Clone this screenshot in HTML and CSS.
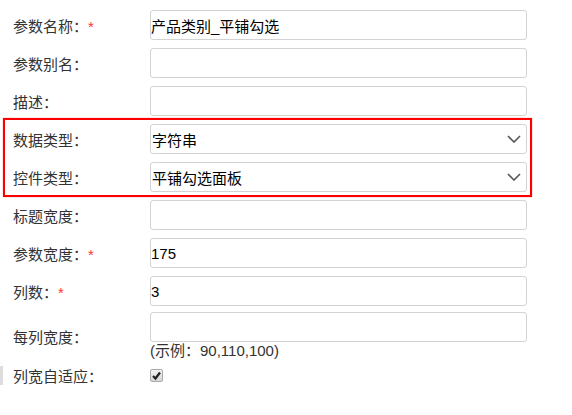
FILE: index.html
```html
<html>
<head>
<meta charset="utf-8">
<link rel="stylesheet" href="styles.css">
</head>
<body>
<div class="form">
  <div class="row">
    <label class="lbl">参数名称：<span class="req">*</span></label>
    <div class="field"><input class="txt" type="text" value="产品类别_平铺勾选"></div>
  </div>
  <div class="row">
    <label class="lbl">参数别名：</label>
    <div class="field"><input class="txt" type="text" value=""></div>
  </div>
  <div class="row">
    <label class="lbl">描述：</label>
    <div class="field"><input class="txt" type="text" value=""></div>
  </div>

  <div class="group">
    <div class="row">
      <label class="lbl">数据类型：</label>
      <div class="field">
        <div class="select">
          <span>字符串</span>
          <svg class="arrow" width="14" height="8" viewBox="0 0 14 8"><polyline points="1,1 7,7 13,1" fill="none" stroke="#555" stroke-width="1.6"/></svg>
        </div>
      </div>
    </div>
    <div class="row">
      <label class="lbl">控件类型：</label>
      <div class="field">
        <div class="select">
          <span>平铺勾选面板</span>
          <svg class="arrow" width="14" height="8" viewBox="0 0 14 8"><polyline points="1,1 7,7 13,1" fill="none" stroke="#555" stroke-width="1.6"/></svg>
        </div>
      </div>
    </div>
  </div>

  <div class="row">
    <label class="lbl">标题宽度：</label>
    <div class="field"><input class="txt" type="text" value=""></div>
  </div>
  <div class="row">
    <label class="lbl">参数宽度：<span class="req">*</span></label>
    <div class="field"><input class="txt" type="text" value="175"></div>
  </div>
  <div class="row">
    <label class="lbl">列数：<span class="req">*</span></label>
    <div class="field"><input class="txt" type="text" value="3"></div>
  </div>
  <div class="row tall">
    <label class="lbl">每列宽度：</label>
    <div class="field">
      <input class="txt" type="text" value="">
      <div class="hint">(示例：90,110,100)</div>
    </div>
  </div>
  <div class="row check-row">
    <label class="lbl">列宽自适应：</label>
    <div class="field">
      <span class="check">
        <svg width="13" height="13" viewBox="0 0 13 13"><polyline points="3,7 5.5,9.5 10,3.5" fill="none" stroke="#222" stroke-width="2.2"/></svg>
      </span>
    </div>
  </div>
</div>
</body>
</html>
```
FILE: styles.css
```css
body {
  margin: 0;
  background: #fff;
  font-family: "Liberation Sans", "Noto Sans CJK SC", sans-serif;
  font-size: 15px;
  color: #333;
}

.form {
  padding-top: 6px;
  width: 540px;
}

.row {
  display: flex;
  align-items: center;
  padding: 4px 0;
}

.lbl {
  box-sizing: border-box;
  width: 150px;
  padding-left: 13px;
  color: #333;
  white-space: nowrap;
}

.req {
  color: #f33;
}

.field {
  width: 377px;
}

.txt {
  box-sizing: border-box;
  display: block;
  width: 377px;
  height: 30px;
  margin: 0;
  padding: 0;
  border: 1px solid #d3d3d3;
  border-radius: 3px;
  font-family: "Liberation Sans", "Noto Sans CJK SC", sans-serif;
  font-size: 15px;
  color: #000;
  background: #fff;
  outline: none;
}

.group {
  position: relative;
}

.group:after {
  content: '';
  position: absolute;
  top: -2px;
  bottom: -1px;
  left: 3px;
  width: 529px;
  box-sizing: border-box;
  border: 2px solid #ff0000;
  box-shadow: 0 0 1px rgba(255, 0, 0, .6);
  pointer-events: none;
}

.select {
  box-sizing: border-box;
  display: flex;
  align-items: center;
  justify-content: space-between;
  width: 377px;
  height: 30px;
  padding: 0 5px 0 1px;
  border: 1px solid #d3d3d3;
  border-radius: 3px;
  color: #000;
}

.arrow {
  display: block;
}

.row.tall {
  padding-top: 2px;
}

.hint {
  line-height: 18px;
  color: #333;
}

.check-row {
  margin-top: 2px;
  padding: 0;
  height: 19px;
  border-left: 3px solid #ddd;
}

.check-row .lbl {
  width: 147px;
  padding-left: 10px;
}

.check {
  display: block;
  box-sizing: border-box;
  width: 13px;
  height: 13px;
  border: 1px solid #aaa;
  border-radius: 2px;
  background: linear-gradient(#f2f2f2, #d6d6d6);
}

.check svg {
  display: block;
  margin: -1px 0 0 -1px;
}
```
